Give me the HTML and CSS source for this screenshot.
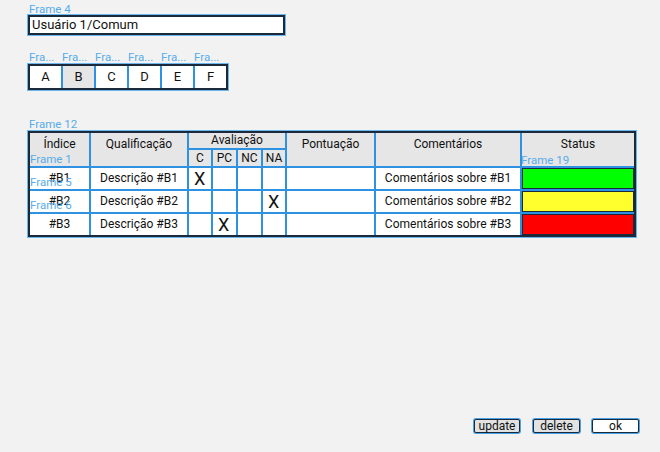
FILE: index.html
```html
<!DOCTYPE html>
<html>
<head>
<meta charset="utf-8">
<link rel="stylesheet" href="styles.css">
</head>
<body>
<div class="page">
  <div class="label">Frame 4</div>
  <div class="field">Usuário 1/Comum</div>

  <div class="tab-labels">
    <span class="label tl">Fra...</span><span class="label tl">Fra...</span><span class="label tl">Fra...</span><span class="label tl">Fra...</span><span class="label tl">Fra...</span><span class="label tl">Fra...</span>
  </div>
  <div class="tabs">
    <div class="tab">A</div>
    <div class="tab sel">B</div>
    <div class="tab">C</div>
    <div class="tab">D</div>
    <div class="tab">E</div>
    <div class="tab">F</div>
  </div>

  <div class="label f12">Frame 12</div>
  <div class="table">
    <div class="h c-idx">Índice</div>
    <div class="h c-qual">Qualificação</div>
    <div class="h c-aval">Avaliação</div>
    <div class="h c-pont">Pontuação</div>
    <div class="h c-com">Comentários</div>
    <div class="h c-stat">Status</div>
    <div class="h sub">C</div>
    <div class="h sub">PC</div>
    <div class="h sub">NC</div>
    <div class="h sub">NA</div>

    <div class="d">#B1</div><div class="d">Descrição #B1</div><div class="d x">X</div><div class="d"></div><div class="d"></div><div class="d"></div><div class="d"></div><div class="d">Comentários sobre #B1</div><div class="d st green"></div>
    <div class="d">#B2</div><div class="d">Descrição #B2</div><div class="d"></div><div class="d"></div><div class="d"></div><div class="d x">X</div><div class="d"></div><div class="d">Comentários sobre #B2</div><div class="d st yellow"></div>
    <div class="d">#B3</div><div class="d">Descrição #B3</div><div class="d"></div><div class="d x">X</div><div class="d"></div><div class="d"></div><div class="d"></div><div class="d">Comentários sobre #B3</div><div class="d st red"></div>

    <span class="label ov ov1">Frame 1</span>
    <span class="label ov ov5">Frame 5</span>
    <span class="label ov ov6">Frame 6</span>
    <span class="label ov ov19">Frame 19</span>
  </div>

  <div class="buttons">
    <div class="btn gray upd">update</div>
    <div class="btn gray">delete</div>
    <div class="btn">ok</div>
  </div>
</div>
</body>
</html>
```
FILE: styles.css
```css
html, body {
  margin: 0;
  padding: 0;
  background: #f2f2f2;
  font-family: Roboto, "Liberation Sans", sans-serif;
  color: #111;
}
.page {
  box-sizing: border-box;
  height: 452px;
  padding: 3px 0 19px 28px;
  display: flex;
  flex-direction: column;
  align-items: flex-start;
}
.label {
  font-size: 11.5px;
  line-height: 12px;
  color: #56aceb;
  padding-left: 1px;
  white-space: nowrap;
}
.field {
  box-sizing: border-box;
  width: 257px;
  height: 20px;
  background: #fff;
  border: 2px solid #1b2a3b;
  box-shadow: 0 0 0 1px #6ab6ee;
  font-size: 13px;
  line-height: 16px;
  padding-left: 2px;
}
.tab-labels {
  display: flex;
  margin-top: 16px;
  height: 12px;
}
.tl {
  width: 32px;
  padding-left: 1px;
}
.tabs {
  display: flex;
  gap: 2px;
  background: #2f91e2;
  border: 2px solid #1b2a3b;
  box-shadow: 0 0 0 1px #6ab6ee;
  height: 22px;
  margin-top: 1px;
}
.tab {
  width: 31px;
  background: #fff;
  font-size: 13px;
  line-height: 22px;
  text-align: center;
}
.tab.sel { background: #e6e6e6; }
.f12 { margin-top: 28px; }
.table {
  position: relative;
  margin-top: 1px;
  display: grid;
  grid-template-columns: 59px 96px 22px 23px 23px 22px 87px 144px 112px;
  grid-template-rows: 15px 16px 21px 21px 21px;
  gap: 2px;
  background: #2f91e2;
  border: 2px solid #1b2a3b;
  box-shadow: 0 0 0 1px #6ab6ee;
}
.h {
  background: #e6e6e6;
  font-size: 12px;
  text-align: center;
  line-height: 14px;
}
.c-idx, .c-qual, .c-pont, .c-com, .c-stat {
  grid-row: 1 / span 2;
  padding-top: 4px;
}
.c-idx { grid-column: 1; }
.c-qual { grid-column: 2; }
.c-aval { grid-column: 3 / span 4; line-height: 15px; }
.c-pont { grid-column: 7; grid-row: 1 / span 2; }
.c-com { grid-column: 8; }
.c-stat { grid-column: 9; }
.sub { grid-row: 2; line-height: 17px; }
.d {
  background: #fff;
  font-size: 12px;
  line-height: 21px;
  text-align: center;
}
.d.x {
  font-size: 18px;
  line-height: 21px;
  text-align: left;
  padding-left: 5px;
}
.st { box-sizing: border-box; border: 1px solid #1b2a3b; }
.green { background: #00ff00; }
.yellow { background: #ffff2e; }
.red { background: #ff0000; }
.ov { position: absolute; }
.ov1 { left: -1px; top: 20px; }
.ov5 { left: -1px; top: 43px; }
.ov6 { left: -1px; top: 66px; }
.ov19 { left: 490px; top: 21px; }
.buttons {
  margin-top: auto;
  align-self: flex-end;
  display: flex;
  gap: 12px;
  margin-right: 21px;
}
.btn {
  box-sizing: border-box;
  width: 47px;
  height: 14px;
  border: 1px solid #1b2a3b;
  box-shadow: 0 0 0 1px #4aa2e6;
  background: #fff;
  font-size: 12px;
  line-height: 13px;
  text-align: center;
  border-radius: 2px;
}
.btn.upd { width: 46px; margin-right: 1px; }
.btn.gray { background: #e2e2e2; }
```
